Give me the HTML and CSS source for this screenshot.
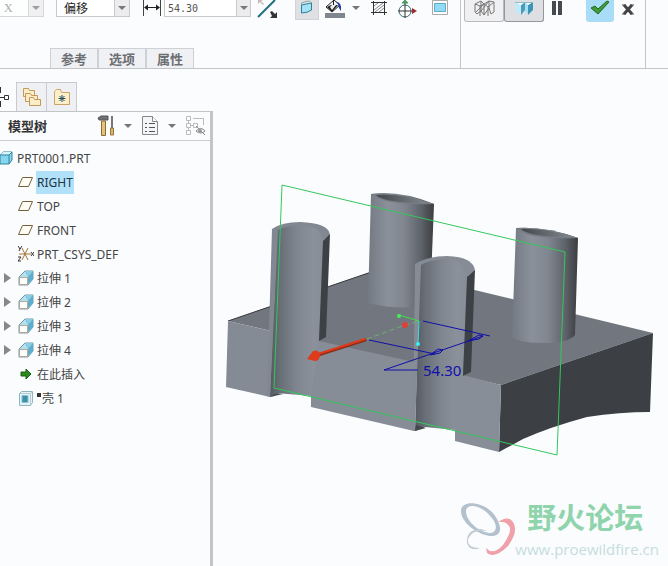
FILE: index.html
```html
<!DOCTYPE html>
<html lang="zh-CN">
<head>
    <meta charset="UTF-8">
    <meta name="viewport" content="width=device-width, initial-scale=1.0">
    <title>PRT0001</title>
    <link rel="stylesheet" href="styles.css">
</head>
<body>
    <header id="ribbon">
        <div class="group main-group">
            <div class="tools">
                <select class="combo axis" aria-label="轴" disabled>
                    <option>X</option>
                </select>
                <select class="combo mode" aria-label="类型">
                    <option>偏移</option>
                </select>
                <svg class="dim" width="20" height="18" viewBox="0 0 20 18">
                    <path d="M1.500 0V16M18.500 0V16" stroke="#444" fill="none"/>
                    <path d="M3 7.500H17" stroke="#222"/>
                    <path d="M2 7.500l4-3v6zM18 7.500l-4-3v6z" fill="#222"/>
                </svg>
                <div class="value">
                    <input type="text" value="54.30" aria-label="偏移值">
                    <button class="drop" aria-label="最近的值"></button>
                </div>
                <button class="icon flip" aria-label="反向">
                    <svg width="24" height="20" viewBox="0 0 24 20">
                        <path d="M2 0h5l-2 1 3 3-1 1-3-3-2 2z" fill="#c5b8bb"/>
                        <path d="M2 17L19 0" stroke="#1f6f7c" stroke-width="2"/>
                        <path d="M14 12l2-1 3 3 2-2v6h-7l2-2z" fill="#333"/>
                    </svg>
                </button>
                <button class="icon pressed" aria-label="曲面">
                    <svg width="16" height="17" viewBox="0 0 16 17">
                        <path d="M2.500 5q5-1 10-2v7q-4 3-10 3z" fill="#a4e2f7" stroke="#2f7f95"/>
                        <path d="M2.500 5V3q5-2 8-2l2 2" fill="none" stroke="#8aa8ae"/>
                    </svg>
                </button>
                <button class="icon paint" aria-label="颜色">
                    <svg width="22" height="19" viewBox="0 0 22 19">
                        <path d="M2 7l8-7 6 5-8 7z" fill="#f3f3f3" stroke="#222"/>
                        <path d="M3 7l4-2h7l-6 7z" fill="#222"/>
                        <path d="M6 7l4-4 2 2-4 5z" fill="#eee"/>
                        <path d="M9.500 0v5" stroke="#222"/>
                        <path d="M12 2q6 0 5 9l-2-3-1-4z" fill="#1e3ca8"/>
                        <path d="M1 13h20v5H1z" fill="#7e8790"/>
                    </svg>
                </button>
                <button class="drop plain" aria-label="更多颜色"></button>
                <button class="icon hatch" aria-label="移除材料">
                    <svg width="18" height="16" viewBox="0 0 18 16">
                        <path d="M4 6l4-3M4 10l9-7M5 12l9-7M9 12l5-4" stroke="#888"/>
                        <path d="M3.500 1v14M14.500 1v14M1 2.500h16M1 12.500h16" stroke="#333"/>
                    </svg>
                </button>
                <button class="icon csys" aria-label="坐标系">
                    <svg width="22" height="20" viewBox="0 0 22 20">
                        <circle cx="8" cy="11" r="6" fill="#fff" stroke="#356b70"/>
                        <path d="M8 3v15M1 11h14" stroke="#333"/>
                        <path d="M8 0v4M5 3l3-3 3 3z" stroke="#4c9a5c" fill="#4c9a5c"/>
                        <path d="M15 8l5 3-5 3z" fill="#a02c2c"/>
                    </svg>
                </button>
                <button class="icon view" aria-label="区域">
                    <svg width="18" height="16" viewBox="0 0 18 16">
                        <path d="M1.500 0.500h15v14h-15z" fill="#fff" stroke="#aaa"/>
                        <path d="M3.500 3.500h11v8h-11z" fill="#93dcf5" stroke="#5cabc7"/>
                    </svg>
                </button>
            </div>
            <nav class="tabs">
                <button>参考</button>
                <button>选项</button>
                <button>属性</button>
            </nav>
        </div>
        <div class="group confirm-group">
            <button class="toggle" aria-label="线框预览">
                <svg width="22" height="18" viewBox="0 0 22 18">
                    <path d="M2 4l6-3 3 3 5-3 5 1v10l-3 2-2-6-5 7-3-4-4 3-2-2zM2 4l5 2 4-2 4 3 6-5M7 6v10M11 4v11M15 7v9M2 13l9-9M8 1v10l8-10v7" fill="none" stroke="#777"/>
                </svg>
            </button>
            <button class="toggle on" aria-label="实体预览">
                <svg width="20" height="18" viewBox="0 0 20 18">
                    <path d="M1 2l6 3v10l-6-4z" fill="#c3eaf6"/>
                    <path d="M7 5l4-3v8l-4 5z" fill="#479dbd"/>
                    <path d="M11 2l3 3v10l-3-4z" fill="#a8e0f2"/>
                    <path d="M14 5l5-3v8l-5 5z" fill="#3c95b6"/>
                    <path d="M1 2h18l-5 3-3-3-4 3z" fill="#fff"/>
                    <path d="M1 2.500h18" stroke="#8bbac8"/>
                </svg>
            </button>
            <button class="icon pause" aria-label="暂停">
                <svg width="12" height="16" viewBox="0 0 12 16">
                    <path d="M1 1h4v14H1zM7 1h4v14H7z" fill="#474a4e"/>
                </svg>
            </button>
            <button class="icon accept" aria-label="确定">
                <svg width="20" height="16" viewBox="0 0 20 16">
                    <path d="M1 8l4-2 3 3L17 1l2 1L8 14z" fill="#3f9b35" stroke="#256b26"/>
                </svg>
            </button>
            <button class="icon cancel" aria-label="取消">
                <svg width="14" height="16" viewBox="0 0 14 16">
                    <path d="M1 5h4M9 5h4M1 14h4M9 14h4" stroke="#444"/>
                    <path d="M3 5l8 9M11 5l-8 9" stroke="#444" stroke-width="3"/>
                </svg>
            </button>
        </div>
        <div class="group rest"></div>
    </header>

    <main>
        <aside id="navigator">
            <div class="nav-tabs">
                <button class="active" aria-label="模型树">
                    <svg width="10" height="24" viewBox="0 0 10 24">
                        <path d="M0.500 2v6M0.500 16v6M0 12.500h4" stroke="#333"/>
                        <path d="M4.500 10.500h4v4h-4z" fill="#fff" stroke="#333"/>
                    </svg>
                </button>
                <button aria-label="文件夹浏览器">
                    <svg width="20" height="20" viewBox="0 0 20 20">
                        <g fill="#fbedc6" stroke="#c5985a">
                            <path d="M1.500 9.500v-8h5l1 2h5v6z"/>
                            <path d="M3.500 14.500v-8h5l1 2h6v6z"/>
                            <path d="M7.500 18.500v-8h4l1 2h6v6z"/>
                        </g>
                    </svg>
                </button>
                <button aria-label="收藏夹">
                    <svg width="18" height="18" viewBox="0 0 18 18">
                        <path d="M1.500 16.500v-13l2-2h4l1 3h8v12z" fill="#fcefc9" stroke="#cda268"/>
                        <path d="M9 7v7M5.500 10.500h7M6.500 8l5 5M11.500 8l-5 5" stroke="#244e62"/>
                    </svg>
                </button>
            </div>
            <div class="panel">
                <div class="panel-head">
                    <h3>模型树</h3>
                    <button class="icon" aria-label="设置">
                        <svg width="18" height="22" viewBox="0 0 18 22">
                            <path d="M1 3l3-2h7v4H7L2 5z" fill="#6c7176" stroke="#555"/>
                            <path d="M4.500 6h4v14.500h-4z" fill="#e5c17c" stroke="#8b6b36"/>
                            <path d="M15 1v12" stroke="#777" stroke-width="2"/>
                            <path d="M13.500 13h3v7h-3z" fill="#e2b566" stroke="#98733a"/>
                        </svg>
                    </button>
                    <button class="drop plain" aria-label="设置菜单"></button>
                    <button class="icon" aria-label="显示">
                        <svg width="18" height="22" viewBox="0 0 18 22">
                            <path d="M1.500 1.500h10l5 5v13h-15z" fill="#f3f5f7" stroke="#83898f"/>
                            <path d="M11.500 1.500v5h5" fill="#fff" stroke="#83898f"/>
                            <path d="M8 8.500h6M8 12.500h6M8 16.500h6M4 8.500h2M4 12.500h2M4 16.500h2" stroke="#555"/>
                        </svg>
                    </button>
                    <button class="drop plain" aria-label="显示菜单"></button>
                    <button class="icon" aria-label="隐藏" disabled>
                        <svg width="22" height="22" viewBox="0 0 22 22">
                            <path d="M1.500 1.500h4v4h-4zM1.500 8.500h4v4h-4zM1.500 15.500h4v4h-4zM8.500 8.500h4v4h-4zM3.500 5v4M3.500 12v4M6 10.500h3M8 3.500h10.500V10" fill="none" stroke="#bbb"/>
                            <path d="M11 16q5-5 9 0-4 4-9 0zM11 11l9 9" fill="none" stroke="#888"/>
                            <circle cx="15" cy="16" r="2" fill="#999"/>
                        </svg>
                    </button>
                </div>
                <ul class="tree">
                    <li class="root"><svg class="part" width="13" height="14" viewBox="0 0 13 14"><path d="M0 4l3-3h9v8l-3 4H0z" fill="#87d5ee" stroke="#30839e"/><path d="M0 4l3-3h9L9 4z" fill="#d5f4fc"/><path d="M0 4h9v9M9 4l3-3" fill="none" stroke="#30839e"/></svg><span>PRT0001.PRT</span></li>
                    <li><svg class="mark"><use href="#plane"/></svg><span class="selected">RIGHT</span></li>
                    <li><svg class="mark"><use href="#plane"/></svg><span>TOP</span></li>
                    <li><svg class="mark"><use href="#plane"/></svg><span>FRONT</span></li>
                    <li><svg class="mark"><path d="M1 9h12M4 3l6 12M10 3L4 15" stroke="#a4743a" fill="none"/><path d="M0 1l2 3 2-3M2 4L1 6M13 7l3 4M16 7l-3 4M0 12h3l-3 4h3" stroke="#333" fill="none"/></svg><span>PRT_CSYS_DEF</span></li>
                    <li><button class="expand" aria-label="展开"></button><svg class="mark"><use href="#extrude"/></svg><span>拉伸 1</span></li>
                    <li><button class="expand" aria-label="展开"></button><svg class="mark"><use href="#extrude"/></svg><span>拉伸 2</span></li>
                    <li><button class="expand" aria-label="展开"></button><svg class="mark"><use href="#extrude"/></svg><span>拉伸 3</span></li>
                    <li><button class="expand" aria-label="展开"></button><svg class="mark"><use href="#extrude"/></svg><span>拉伸 4</span></li>
                    <li><svg class="mark"><path d="M3 7h5V4l5 5-5 5v-3H3z" fill="#2a8a1c" stroke="#1d5c18"/></svg><span>在此插入</span></li>
                    <li><svg class="mark"><path d="M1.500 4.500l2-2h11v11l-2 3h-11z" fill="#e6f2f6" stroke="#8fb5c2"/><path d="M12.500 16V4.500H2M12.500 4.500l2-2" fill="none" stroke="#b4cdd5"/><path d="M4 6.500h6v7H4z" fill="#3f8fa9" stroke="#85c4d8"/></svg><span class="pending">壳 1</span></li>
                </ul>
            </div>
        </aside>

        <section id="canvas">
            <svg class="model" viewBox="213 69 455 497">
                <defs>
                    <linearGradient id="inner">
                        <stop offset="0" stop-color="#565a62"/>
                        <stop offset="0.2" stop-color="#6a7078"/>
                        <stop offset="0.5" stop-color="#7f868f"/>
                        <stop offset="0.8" stop-color="#8a919b"/>
                        <stop offset="1" stop-color="#868d97"/>
                    </linearGradient>
                    <linearGradient id="outer">
                        <stop offset="0" stop-color="#747a83"/>
                        <stop offset="0.3" stop-color="#8a919b"/>
                        <stop offset="0.55" stop-color="#80868f"/>
                        <stop offset="0.8" stop-color="#5f646b"/>
                        <stop offset="1" stop-color="#3a3d41"/>
                    </linearGradient>
                    <linearGradient id="hole">
                        <stop offset="0" stop-color="#43474c"/>
                        <stop offset="1" stop-color="#82888f"/>
                    </linearGradient>
                </defs>

                <!-- plate -->
                <path d="M228 321L383 268L653 333L501 385z" fill="#72777f"/>
                <path d="M228 321L383 268" stroke="#33363a"/>
                <path d="M501 385L653 333L650 412Q620 412 587 417Q550 427 523 439L499 452z" fill="#3c3f43"/>
                <path d="M228 321L275 332V396L270 397L226 387z" fill="#848b94"/>
                <path d="M319 341L414 362V431L311 407V341z" fill="#868d97"/>
                <path d="M463 375L501 385L499 452L455 441V375z" fill="#878e98"/>

                <!-- rear bosses -->
                <path d="M371 194Q400 190 434 204L430 305Q400 311 368 303z" fill="url(#outer)"/>
                <path d="M371 194Q400 191 434 204Q385 206 371 194z" fill="#777d85"/>
                <path d="M376 195Q400 193 428 203Q384 203 376 195z" fill="url(#hole)"/>
                <path d="M516 228Q545 226 578 238L575 335Q568 343 545 343Q520 343 512 337z" fill="url(#outer)"/>
                <path d="M516 228Q545 226 578 238Q526 240 516 228z" fill="#777d85"/>
                <path d="M521 229Q545 228 572 237Q529 237 521 229z" fill="url(#hole)"/>

                <!-- cut bosses in front -->
                <path d="M277 229Q290 223 304 224Q324 226 324 241L319 341L311 396L276 393L270 397L273 330z" fill="url(#inner)"/>
                <path d="M272 229Q282 222 300 222Q329 223 330 235L323 241Q322 226 301 225Q284 226 278 230L270 397L267 396z" fill="#828891"/>
                <path d="M323 241L330 234L326 337L319 341z" fill="#3d4145"/>
                <path d="M270 397L276 393L283 394z" fill="#44484d"/>
                <path d="M420 264Q432 258 446 258Q467 259 468 277L463 375L455 376V430L425 427L415 431z" fill="url(#inner)"/>
                <path d="M415 264Q428 256 447 256Q474 257 475 271L467 277Q466 260 446 259Q428 260 421 265L415 431H413z" fill="#868c95"/>
                <path d="M467 277L475 270L471 372L463 376z" fill="#3d4145"/>
                <path d="M415 431L416 425L426 428z" fill="#44484d"/>

                <!-- datum plane and drag handles -->
                <path d="M282 185L565 252L557 455L274 388z" fill="none" stroke="#35c75b"/>
                <path d="M367 339L405 325L419 321" fill="none" stroke="#6fae72" stroke-dasharray="5 3"/>
                <path d="M399 315L419 321" stroke="#3be04c"/>
                <circle cx="399" cy="316" r="2" fill="#46f052"/>
                <circle cx="405" cy="325" r="3" fill="#df4037"/>
                <path d="M419 321L418 344" stroke="#35dfe6"/>
                <circle cx="418" cy="344" r="2" fill="#35f0f6"/>
                <path d="M318 355L365 340" stroke="#8f2b16" stroke-width="3" stroke-linecap="round"/>
                <path d="M318 354L365 339" stroke="#dd3b1c" stroke-width="2" stroke-linecap="round"/>
                <path d="M307 359L313 351Q319 349 320 356Q319 361 315 361z" fill="#dd3b1c"/>

                <!-- dimension -->
                <path d="M423 321L490 336M369 340L435 354M418 370H384L483 336" fill="none" stroke="#1010a8"/>
                <path d="M430 355L438 349L443 350L440 353zM468 341L479 335L483 336L479 339z" fill="none" stroke="#1010a8"/>
                <text x="423" y="376">54.30</text>
            </svg>
            <div class="watermark">
                <svg width="58" height="58" viewBox="0 0 58 58">
                    <path fill-rule="evenodd" d="M2 10C2-3 30 1 38 18C45 31 39 36 31 35C17 33 2 21 2 10zM7 11C8 22 22 32 32 32C38 31 39 24 32 16C22 3 6 2 7 11z" fill="#b3c0cd"/>
                    <path d="M39 21Q49 14 54 21Q60 30 49 45Q36 58 28 52L27 47Q34 55 44 44Q55 28 49 24Q46 20 39 21z" fill="#efa0a8"/>
                    <path d="M28 30Q13 28 9 38Q8 47 21 47Q11 51 8 42Q7 28 22 28z" fill="#c5cbd3"/>
                </svg>
                <div class="brand">
                    <strong>野火论坛</strong>
                    <a href="#">www.proewildfire.cn</a>
                </div>
            </div>
        </section>
    </main>

    <!-- shared tree icons -->
    <svg class="symbols">
        <symbol id="plane" viewBox="0 0 16 18">
            <path d="M4.500 4.500h10l-4 9h-10z" fill="#fffdf6" stroke="#77603c"/>
        </symbol>
        <symbol id="extrude" viewBox="0 0 16 18">
            <path d="M1 8l6-6h8v8l-5 6H1z" fill="#b5e0ef" stroke="#7499a5"/>
            <path d="M7 2h8v8l-5 5V8z" fill="#5eaecb"/>
            <path d="M7 2l3 6 5-6z" fill="#8dcce2"/>
            <path d="M1.500 8.500h8v7h-8z" fill="#fff" stroke="#b2a998"/>
        </symbol>
    </svg>
</body>
</html>
```
FILE: styles.css
```css
* {
    margin: 0;
    padding: 0;
    box-sizing: border-box;
}

body {
    min-height: 100vh;
    display: flex;
    flex-direction: column;
    background-color: #fbfcfe;
    color: #444;
    font-family: "Noto Sans", "Noto Sans CJK SC", sans-serif;
    font-size: 12px;
}

button, input, select {
    font: inherit;
    color: inherit;
    border: none;
    border-radius: 0;
    background: none;
}

svg {
    display: block;
    flex-shrink: 0;
}

/* ribbon */

#ribbon {
    display: flex;
    height: 69px;
    border-bottom: 1px solid #c3c4c8;
}

.group {
    border-right: 1px solid #c3c4c8;
}

.main-group {
    flex: 1;
    display: flex;
    flex-direction: column;
    justify-content: space-between;
}

.tools {
    display: flex;
    align-items: flex-start;
}

.combo {
    appearance: none;
    height: 17px;
    border: 1px solid #c8c9cc;
    border-top: none;
    padding-left: 7px;
    background: url("data:image/svg+xml,%3Csvg xmlns='http://www.w3.org/2000/svg' width='15' height='16'%3E%3Cpath d='M0 0h15v16H0z' fill='%23ececee'/%3E%3Cpath d='M.5 0v16' stroke='%23c8c9cc'/%3E%3Cpath d='M4 6h8l-4 4z' fill='%23777'/%3E%3C/svg%3E") right top no-repeat #fff;
}

.axis {
    width: 44px;
    padding-left: 4px;
    border-left: none;
    font-family: "Liberation Serif", serif;
    color: #888;
    opacity: .7;
}

.mode {
    width: 74px;
    margin-left: 12px;
    color: #222;
}

.dim {
    margin-left: 12px;
}

.value {
    display: flex;
    width: 87px;
    height: 17px;
    margin-left: 2px;
    border: 1px solid #c8c9cc;
    border-top: none;
}

.value input {
    flex: 1;
    min-width: 0;
    padding-left: 3px;
    background-color: #fff;
    font-family: "DejaVu Sans Mono", monospace;
    font-size: 10px;
    color: #555;
}

.drop {
    width: 14px;
    display: flex;
    align-items: center;
    justify-content: center;
    border-left: 1px solid #c8c9cc;
    background-color: #ececee;
}

.drop::before {
    content: "";
    border: 4px solid transparent;
    border-top-color: #777;
    border-bottom: none;
}

.drop.plain {
    width: 8px;
    height: 16px;
    border: none;
    background: none;
}

.main-group .plain {
    margin-left: 6px;
}

.icon {
    display: flex;
    justify-content: center;
}

.flip {
    margin-left: 5px;
}

.pressed {
    width: 24px;
    height: 20px;
    margin-left: 15px;
    background-color: #dfe0e3;
    border: 1px solid #d2d3d6;
    border-top: none;
}

.paint {
    margin-left: 5px;
}

.hatch {
    margin-left: 10px;
}

.csys {
    margin-left: 9px;
}

.view {
    margin-left: 12px;
}

.tabs {
    display: flex;
    padding-left: 50px;
}

.tabs button {
    width: 48px;
    height: 20px;
    border: 1px solid #cfd0d4;
    border-bottom: none;
    background-color: #f0f1f4;
    font-size: 13px;
    font-weight: bold;
    line-height: 18px;
    color: #6c6e72;
}

.confirm-group {
    display: flex;
    align-items: flex-start;
    width: 185px;
    padding-left: 3px;
}

.toggle {
    display: flex;
    justify-content: center;
    width: 40px;
    height: 22px;
    border: 1px solid #b9babd;
    border-top: none;
    border-radius: 0 0 3px 3px;
    background-color: #f0f0f2;
}

.toggle.on {
    border-color: #94969b;
    background-color: #dedfe3;
}

.pause {
    margin-left: 7px;
}

.accept {
    width: 28px;
    height: 22px;
    margin-left: 23px;
    border-radius: 0 0 3px 3px;
    background-color: #a9dcf6;
}

.cancel {
    margin-left: 7px;
}

.rest {
    width: 22px;
    border: none;
}

/* model tree */

main {
    flex: 1;
    display: flex;
}

#navigator {
    width: 213px;
    display: flex;
    flex-direction: column;
    padding-top: 13px;
}

.nav-tabs {
    display: flex;
}

.nav-tabs button {
    display: flex;
    align-items: center;
    justify-content: center;
    width: 30px;
    height: 29px;
    border: 1px solid #c9cace;
    border-left: none;
    border-bottom: none;
    background-color: #eff0f4;
}

.nav-tabs .active {
    width: 17px;
    justify-content: flex-start;
    border-top: none;
    background-color: #fbfcfe;
}

.panel {
    flex: 1;
    border-top: 1px solid #c3c4c8;
    border-right: 3px solid #c3c4c8;
}

.panel-head {
    display: flex;
    align-items: center;
    gap: 9px;
    height: 29px;
    padding: 0 3px 0 8px;
    border-bottom: 1px solid #cccdd1;
}

.panel-head h3 {
    flex: 1;
    font-size: 13px;
    line-height: 20px;
    color: #333;
}

.tree {
    list-style: none;
    padding-top: 5px;
}

.tree li {
    display: flex;
    align-items: center;
    height: 24px;
    padding-left: 18px;
}

.tree .root {
    padding-left: 0;
}

.tree span {
    margin-left: 2px;
    padding: 0 1px;
    line-height: 23px;
}

.tree .root span {
    margin-left: 3px;
}

.tree .selected {
    background-color: #b0e1f8;
    color: #234;
}

.mark {
    width: 16px;
    height: 18px;
}

.expand {
    width: 7px;
    height: 10px;
    margin: 0 7px 0 -14px;
    border: 5px solid transparent;
    border-left: 7px solid #888;
    border-right: none;
}

.pending::before {
    content: "";
    display: inline-block;
    width: 4px;
    height: 4px;
    margin-right: 1px;
    background-color: #333;
    vertical-align: 6px;
}

/* graphics area */

#canvas {
    flex: 1;
    position: relative;
}

.model {
    width: 100%;
}

.model text {
    font-size: 15px;
    fill: #1010a8;
}

.watermark {
    position: absolute;
    right: 9px;
    bottom: 7px;
    display: flex;
    align-items: flex-end;
}

.brand {
    display: flex;
    flex-direction: column;
    margin-left: -2px;
}

.brand strong {
    padding-left: 12px;
    font-size: 29px;
    line-height: 42px;
    color: #90d4ad;
}

.brand a {
    font-family: "Open Sans", sans-serif;
    font-size: 15px;
    line-height: 20px;
    color: #c5dedd;
    text-decoration: none;
}

.symbols {
    display: none;
}
```
